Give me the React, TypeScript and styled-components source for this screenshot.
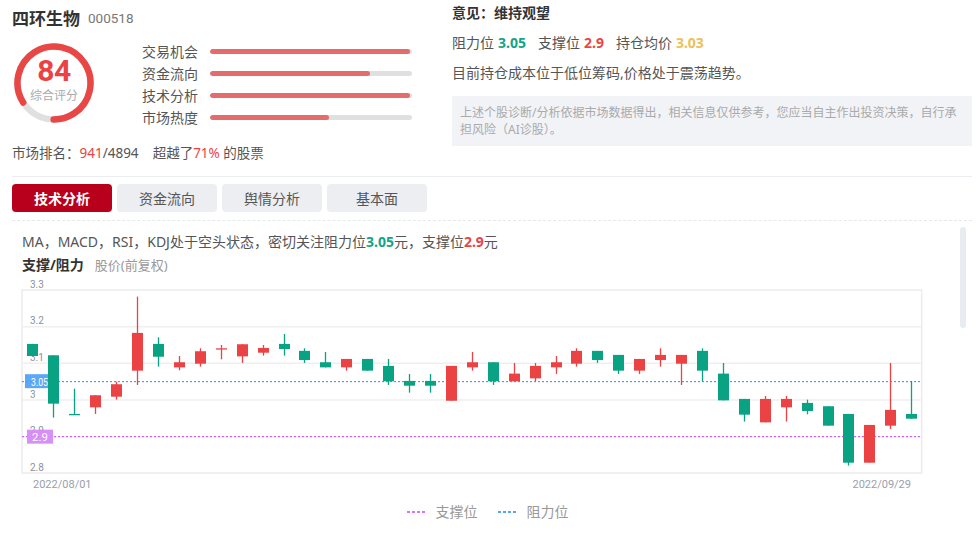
import styled, { createGlobalStyle } from "styled-components";

const GlobalStyle = createGlobalStyle`
  body {
    margin: 0;
    background: #fff;
    font-family: "Noto Sans", "Noto Sans CJK SC", sans-serif;
    color: #333;
  }
`;

const RED = "#eb4344";
const GREEN = "#09a383";

const Page = styled.div`
  width: 976px;
  height: 539px;
  box-sizing: border-box;
  padding: 0 4px 0 12px;
  overflow: hidden;
`;

const Top = styled.div`
  display: grid;
  grid-template-columns: 440px 1fr;
  height: 176px;
`;

const Column = styled.div`
  display: flex;
  flex-direction: column;
`;

const TitleRow = styled.div`
  display: flex;
  align-items: center;
  gap: 8px;
  height: 34px;
`;

const StockName = styled.span`
  font-size: 17px;
  font-weight: 700;
  color: #333;
`;

const StockCode = styled.span`
  font-family: Roboto, sans-serif;
  font-size: 13.5px;
  color: #777;
  padding-top: 2px;
`;

const ScoreRow = styled.div`
  display: flex;
  margin-top: 6px;
`;

const Ring = styled.div`
  position: relative;
  width: 80px;
  height: 80px;
  margin: 3px 0 0 2px;
  svg {
    position: absolute;
    inset: 0;
  }
`;

const ScoreText = styled.div`
  position: relative;
  display: flex;
  flex-direction: column;
  align-items: center;
  padding-top: 10px;
`;

const ScoreNum = styled.div`
  font-family: Roboto, sans-serif;
  font-size: 30px;
  font-weight: 700;
  line-height: 35px;
  color: ${RED};
  letter-spacing: -0.5px;
`;

const ScoreLabel = styled.div`
  font-size: 12px;
  line-height: 16px;
  color: #aaa;
`;

const Bars = styled.div`
  display: flex;
  flex-direction: column;
  width: 270px;
  margin-left: 48px;
`;

const BarRow = styled.div`
  display: flex;
  align-items: center;
  height: 22px;
`;

const BarLabel = styled.span`
  width: 68px;
  font-size: 14px;
  color: #555;
`;

const Track = styled.div`
  flex: 1;
  height: 5px;
  border-radius: 3px;
  background: #e0e0e0;
  overflow: hidden;
`;

const Fill = styled.div`
  height: 100%;
  border-radius: 3px;
  background: #e46c6c;
`;

const RankRow = styled.div`
  margin-top: 15px;
  font-size: 13.5px;
  line-height: 20px;
  color: #555;
  white-space: pre;
`;

const Hot = styled.span<{ $color: string; $bold?: boolean }>`
  color: ${(p) => p.$color};
  font-weight: ${(p) => (p.$bold ? 700 : 400)};
`;

const Opinion = styled.div`
  margin-top: 3px;
  font-size: 14px;
  font-weight: 700;
  line-height: 20px;
  color: #333;
`;

const Levels = styled.div`
  display: flex;
  gap: 12px;
  margin-top: 10px;
  font-size: 14px;
  line-height: 20px;
  color: #555;
`;

const Level = styled.span`
  display: flex;
  gap: 4px;
`;

const Summary = styled.div`
  margin-top: 10px;
  font-size: 14px;
  line-height: 20px;
  color: #555;
`;

const Notice = styled.div`
  margin-top: 13px;
  height: 50px;
  box-sizing: border-box;
  padding: 8px;
  background: #f1f3f7;
  font-size: 12px;
  line-height: 17px;
  color: #aaa;
`;

const Divider = styled.div`
  height: 1px;
  background: #eceef3;
`;

const Tabs = styled.div`
  display: flex;
  gap: 5px;
  margin-top: 7px;
`;

const Tab = styled.div<{ $active?: boolean }>`
  display: flex;
  align-items: center;
  justify-content: center;
  width: 100px;
  height: 28px;
  border-radius: 4px;
  font-size: 14px;
  font-weight: ${(p) => (p.$active ? 600 : 400)};
  background: ${(p) => (p.$active ? "#b8001c" : "#eceef2")};
  color: ${(p) => (p.$active ? "#fff" : "#555")};
`;

const Panel = styled.div`
  position: relative;
  margin-top: 8px;
  border-top: 1px dashed #e6e8ec;
  padding: 10px 0 0 10px;
`;

const ScrollThumb = styled.div`
  position: absolute;
  top: 6px;
  right: 6px;
  width: 6px;
  height: 101px;
  border-radius: 3px;
  background: #e8ebf0;
`;

const Verdict = styled.div`
  font-size: 14px;
  line-height: 22px;
  color: #555;
`;

const ChartTitle = styled.div`
  display: flex;
  align-items: baseline;
  gap: 11px;
  margin-top: 1px;
  line-height: 22px;
`;

const ChartName = styled.span`
  font-size: 14px;
  font-weight: 700;
  color: #333;
`;

const ChartSub = styled.span`
  font-size: 13px;
  color: #999;
`;

const ChartSvg = styled.svg`
  display: block;
  margin-left: -2px;
`;

const Legend = styled.div`
  display: flex;
  justify-content: center;
  gap: 20px;
  width: 920px;
  box-sizing: border-box;
  margin: 6px 0 0 -2px;
  padding-left: 15px;
  line-height: 20px;
  font-size: 14px;
  color: #999;
`;

const LegendItem = styled.span`
  display: flex;
  align-items: center;
  gap: 11px;
`;

const bars = [
  { label: "交易机会", value: 99 },
  { label: "资金流向", value: 79 },
  { label: "技术分析", value: 99 },
  { label: "市场热度", value: 59 },
];

// open, high, low, close
const candles: [number, number, number, number][] = [
  [3.153, 3.153, 3.12, 3.12],
  [3.122, 3.122, 2.952, 2.99],
  [2.962, 3.031, 2.961, 2.961],
  [2.98, 3.013, 2.962, 3.013],
  [3.009, 3.05, 3.001, 3.043],
  [3.08, 3.282, 3.041, 3.183],
  [3.153, 3.171, 3.091, 3.118],
  [3.089, 3.12, 3.081, 3.103],
  [3.099, 3.141, 3.091, 3.133],
  [3.14, 3.15, 3.111, 3.141],
  [3.119, 3.152, 3.101, 3.152],
  [3.129, 3.15, 3.121, 3.142],
  [3.153, 3.18, 3.121, 3.139],
  [3.134, 3.141, 3.101, 3.109],
  [3.103, 3.131, 3.089, 3.089],
  [3.089, 3.112, 3.08, 3.112],
  [3.112, 3.112, 3.08, 3.08],
  [3.093, 3.112, 3.041, 3.051],
  [3.052, 3.071, 3.02, 3.039],
  [3.052, 3.071, 3.02, 3.039],
  [2.998, 3.093, 2.998, 3.093],
  [3.089, 3.131, 3.08, 3.103],
  [3.103, 3.103, 3.041, 3.051],
  [3.051, 3.101, 3.051, 3.072],
  [3.059, 3.101, 3.051, 3.093],
  [3.089, 3.12, 3.071, 3.103],
  [3.099, 3.141, 3.091, 3.134],
  [3.134, 3.134, 3.101, 3.109],
  [3.123, 3.123, 3.071, 3.08],
  [3.08, 3.112, 3.071, 3.112],
  [3.109, 3.141, 3.091, 3.123],
  [3.099, 3.123, 3.041, 3.123],
  [3.134, 3.141, 3.051, 3.08],
  [3.072, 3.101, 2.999, 2.999],
  [3.003, 3.003, 2.941, 2.96],
  [2.939, 3.011, 2.939, 3.003],
  [2.98, 3.011, 2.941, 3.003],
  [2.992, 3.001, 2.961, 2.97],
  [2.983, 2.983, 2.93, 2.93],
  [2.962, 2.962, 2.821, 2.829],
  [2.829, 2.932, 2.829, 2.932],
  [2.93, 3.101, 2.921, 2.973],
  [2.962, 3.052, 2.949, 2.949],
];

const PLOT = { left: 22, right: 921.7, top: 290, bottom: 473 };
const toY = (p: number) => PLOT.top + (3.3 - p) * 366.67;
const step = (PLOT.right - PLOT.left) / candles.length;
const toX = (i: number) => PLOT.left + step * (i + 0.5);

function ScoreRing({ score }: { score: number }) {
  const r = 36.5;
  const c = 2 * Math.PI * r;
  return (
    <svg width="80" height="80" viewBox="0 0 80 80">
      <circle cx="40" cy="40" r={r} fill="none" stroke="#e0e0e0" strokeWidth="6.5" />
      <circle
        cx="40"
        cy="40"
        r={r}
        fill="none"
        stroke="#e94646"
        strokeWidth="6.5"
        strokeLinecap="round"
        strokeDasharray={`${(c * score) / 100} ${c}`}
        transform="rotate(147.6 40 40)"
      />
    </svg>
  );
}

function KChart() {
  const grid = [3.2, 3.1, 3.0, 2.9];
  const ticks = [3.3, 3.2, 3.1, 3, 2.9, 2.8];
  return (
    <ChartSvg width="920" height="220" viewBox="20 276 920 220">
      <rect
        x={PLOT.left}
        y={PLOT.top}
        width={PLOT.right - PLOT.left}
        height={PLOT.bottom - PLOT.top}
        fill="none"
        stroke="#ececec"
        strokeWidth="1.5"
      />
      {grid.map((g) => (
        <line key={g} x1={PLOT.left} x2={PLOT.right} y1={toY(g)} y2={toY(g)} stroke="#efefef" strokeWidth="1.5" />
      ))}
      {ticks.map((t) => (
        <text key={t} x="30" y={toY(t) - 2.5} fontSize="10" fill="#8c929c" fontFamily="Roboto, sans-serif">
          {String(t)}
        </text>
      ))}
      <line x1={PLOT.left} x2={PLOT.right} y1={toY(3.05)} y2={toY(3.05)} stroke="#3b86e6" strokeDasharray="2 2" />
      <line x1={PLOT.left} x2={PLOT.right} y1={toY(2.9)} y2={toY(2.9)} stroke="#c44cf5" strokeDasharray="2 2" />
      <rect x="25" y={toY(3.05) - 7.5} width="32" height="14" fill="#4a9ff5" opacity="0.9" />
      <text
        x="31"
        y={toY(3.05) + 4}
        fontSize="11.5"
        fill="#fff"
        textLength="17"
        lengthAdjust="spacingAndGlyphs"
        fontFamily="Roboto, sans-serif"
      >
        3.05
      </text>
      <rect x="27" y={toY(2.9) - 7} width="26" height="14" fill="#d58af6" opacity="0.95" />
      <text x="40" y={toY(2.9) + 4} fontSize="11.5" fill="#fff" textAnchor="middle" fontFamily="Roboto, sans-serif">
        2.9
      </text>
      {candles.map(([o, h, l, c], i) => {
        const color = c >= o ? RED : GREEN;
        const cx = Math.round(toX(i)) + 0.5;
        const top = toY(Math.max(o, c));
        const bottom = toY(Math.min(o, c));
        return (
          <g key={i}>
            <line x1={cx} x2={cx} y1={toY(h)} y2={toY(l)} stroke={color} strokeWidth="1.3" />
            <rect x={cx - 5.5} y={top} width="11" height={Math.max(bottom - top, 1.3)} fill={color} />
          </g>
        );
      })}
      <text x="33" y="488" fontSize="11" fill="#9aa0ab" fontFamily="Roboto, sans-serif">
        2022/08/01
      </text>
      <text x="911" y="488" fontSize="11" fill="#9aa0ab" textAnchor="end" fontFamily="Roboto, sans-serif">
        2022/09/29
      </text>
    </ChartSvg>
  );
}

function DashMark({ color }: { color: string }) {
  return (
    <svg width="18" height="4" viewBox="0 0 18 4">
      <line x1="0" x2="18" y1="2" y2="2" stroke={color} strokeWidth="1.5" strokeDasharray="3 2" />
    </svg>
  );
}

export default function App() {
  return (
    <Page>
      <GlobalStyle />
      <Top>
        <Column>
          <TitleRow>
            <StockName>四环生物</StockName>
            <StockCode>000518</StockCode>
          </TitleRow>
          <ScoreRow>
            <Ring>
              <ScoreRing score={84} />
              <ScoreText>
                <ScoreNum>84</ScoreNum>
                <ScoreLabel>综合评分</ScoreLabel>
              </ScoreText>
            </Ring>
            <Bars>
              {bars.map((b) => (
                <BarRow key={b.label}>
                  <BarLabel>{b.label}</BarLabel>
                  <Track>
                    <Fill style={{ width: `${b.value}%` }} />
                  </Track>
                </BarRow>
              ))}
            </Bars>
          </ScoreRow>
          <RankRow>
            市场排名：<Hot $color={RED}>941</Hot>/4894{"    "}超越了<Hot $color={RED}>71%</Hot> 的股票
          </RankRow>
        </Column>
        <Column>
          <Opinion>意见：维持观望</Opinion>
          <Levels>
            <Level>
              阻力位<Hot $color="#13a386" $bold>3.05</Hot>
            </Level>
            <Level>
              支撑位<Hot $color="#ef4444" $bold>2.9</Hot>
            </Level>
            <Level>
              持仓均价<Hot $color="#ecc05a" $bold>3.03</Hot>
            </Level>
          </Levels>
          <Summary>目前持仓成本位于低位筹码,价格处于震荡趋势。</Summary>
          <Notice>
            上述个股诊断/分析依据市场数据得出，相关信息仅供参考，您应当自主作出投资决策，自行承
            <br />
            担风险（AI诊股）。
          </Notice>
        </Column>
      </Top>
      <Divider />
      <Tabs>
        <Tab $active>技术分析</Tab>
        <Tab>资金流向</Tab>
        <Tab>舆情分析</Tab>
        <Tab>基本面</Tab>
      </Tabs>
      <Panel>
        <ScrollThumb />
        <Verdict>
          MA，MACD，RSI，KDJ处于空头状态，密切关注阻力位<Hot $color="#13a386" $bold>3.05</Hot>元，支撑位
          <Hot $color={RED} $bold>2.9</Hot>元
        </Verdict>
        <ChartTitle>
          <ChartName>支撑/阻力</ChartName>
          <ChartSub>股价(前复权)</ChartSub>
        </ChartTitle>
        <KChart />
        <Legend>
          <LegendItem>
            <DashMark color="#c44cf5" />
            支撑位
          </LegendItem>
          <LegendItem>
            <DashMark color="#1e88f0" />
            阻力位
          </LegendItem>
        </Legend>
      </Panel>
    </Page>
  );
}
